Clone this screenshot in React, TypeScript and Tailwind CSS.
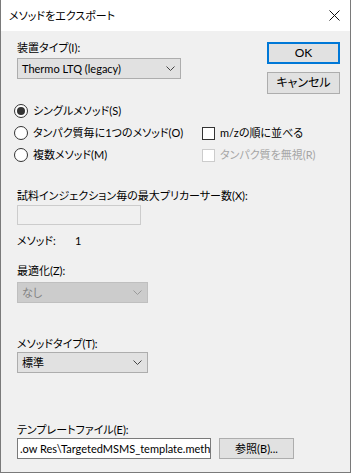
const FONT = "[font-family:Lato,'Noto_Sans_CJK_JP',sans-serif] [font-feature-settings:'palt']";

function Chevron({ color = "#333" }: { color?: string }) {
  return (
    <svg width="9" height="5" viewBox="0 0 9 5" className="shrink-0">
      <polyline points="0.5,0.5 4.5,4.5 8.5,0.5" fill="none" stroke={color} strokeWidth="1" />
    </svg>
  );
}

function Select({ value, width, disabled }: { value: string; width: string; disabled?: boolean }) {
  return (
    <div
      className={`flex h-[21px] items-center justify-between border pl-[4px] pr-[5px] ${width} ${
        disabled ? "border-[#bfbfbf] bg-[#cccccc] text-[#838383]" : "border-[#adadad] bg-[#e1e1e1] text-black"
      }`}
    >
      <span className="leading-none">{value}</span>
      <Chevron color={disabled ? "#9a9a9a" : "#444"} />
    </div>
  );
}

function Radio({ label, checked }: { label: string; checked?: boolean }) {
  return (
    <div className="flex h-[22px] items-center gap-[5px]">
      <span className="flex h-[14px] w-[14px] items-center justify-center rounded-full border border-[#333] bg-white">
        {checked && <span className="h-[8px] w-[8px] rounded-full bg-[#333]" />}
      </span>
      <span>{label}</span>
    </div>
  );
}

function Check({ label, disabled }: { label: string; disabled?: boolean }) {
  return (
    <div className={`flex h-[22px] items-center gap-[5px] ${disabled ? "text-[#a6a6a6]" : ""}`}>
      <span className={`h-[13px] w-[13px] border bg-white ${disabled ? "border-[#cccccc]" : "border-[#333]"}`} />
      <span>{label}</span>
    </div>
  );
}

function Button({ children, primary }: { children: React.ReactNode; primary?: boolean }) {
  return (
    <div
      className={`flex h-[22px] w-[73px] items-center justify-center bg-[#e1e1e1] text-[12px] ${
        primary ? "border-2 border-[#0078d7]" : "border border-[#adadad]"
      }`}
    >
      {children}
    </div>
  );
}

export default function App() {
  return (
    <div className={`flex h-[473px] w-[351px] flex-col overflow-hidden border-x border-b border-[#7a7a7a] text-[11px] leading-[16px] text-black ${FONT}`}>
      <div className="flex h-[31px] shrink-0 items-center justify-between bg-white pl-[8px] pr-[10px]">
        <span>メソッドをエクスポート</span>
        <svg width="11" height="11" viewBox="0 0 11 11">
          <path d="M0.5 0.5 L10.5 10.5 M10.5 0.5 L0.5 10.5" stroke="#111" strokeWidth="1" />
        </svg>
      </div>

      <div className="flex flex-1 flex-col bg-[#f0f0f0] pl-[16px] pr-[10px]">
        <div className="flex h-[48px] items-start justify-between pt-[9px]">
          <div className="flex flex-col">
            <span>装置タイプ(I):</span>
            <div className="mt-[2px]">
              <Select value="Thermo LTQ (legacy)" width="w-[164px]" />
            </div>
          </div>
          <div className="flex flex-col gap-[8px] pt-[2px]">
            <Button primary>OK</Button>
            <Button>キャンセル</Button>
          </div>
        </div>

        <div className="-ml-[3px] mt-[21px] flex">
          <div className="flex w-[188px] flex-col">
            <Radio label="シングルメソッド(S)" checked />
            <Radio label="タンパク質毎に1つのメソッド(O)" />
            <Radio label="複数メソッド(M)" />
          </div>
          <div className="flex flex-col pt-[22px]">
            <Check label="m/zの順に並べる" />
            <Check label="タンパク質を無視(R)" disabled />
          </div>
        </div>

        <span className="mt-[22px]">試料インジェクション毎の最大プリカーサー数(X):</span>
        <div className="mt-[1px] h-[20px] w-[124px] border border-[#cccccc] bg-[#f0f0f0]" />

        <div className="mt-[8px] flex">
          <span className="w-[58px]">メソッド:</span>
          <span>1</span>
        </div>

        <span className="mt-[14px]">最適化(Z):</span>
        <div className="mt-[3px]">
          <Select value="なし" width="w-[131px]" disabled />
        </div>

        <span className="mt-[33px]">メソッドタイプ(T):</span>
        <div>
          <Select value="標準" width="w-[131px]" />
        </div>

        <span className="mt-[49px]">テンプレートファイル(E):</span>
        <div className="flex gap-[8px]">
          <div className="flex h-[21px] w-[194px] items-center overflow-hidden whitespace-nowrap border border-[#7a7a7a] bg-white pl-[2px]">
            .ow Res\TargetedMSMS_template.meth
          </div>
          <div className="flex h-[21px] w-[75px] items-center justify-center border border-[#adadad] bg-[#e1e1e1]">
            参照(B)...
          </div>
        </div>
      </div>
    </div>
  );
}
